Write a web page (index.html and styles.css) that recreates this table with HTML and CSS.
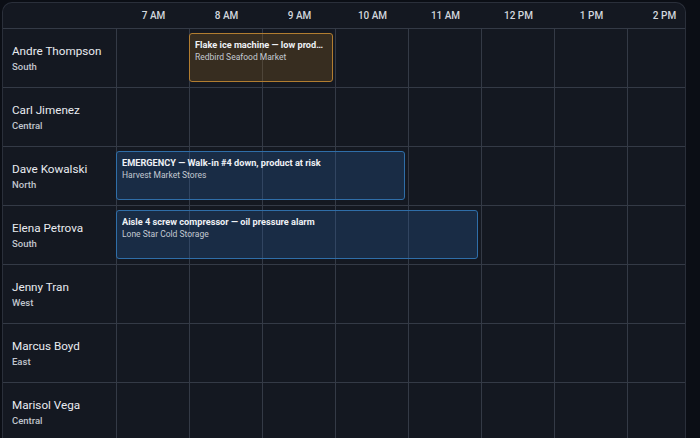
FILE: index.html
```html
<!DOCTYPE html>
<html lang="en">
<head>
<meta charset="utf-8">
<title>Dispatch Schedule</title>
<link rel="stylesheet" href="styles.css">
</head>
<body>
<div class="board">
  <div class="row head">
    <div class="name-cell"></div>
    <div class="hour">7 AM</div>
    <div class="hour">8 AM</div>
    <div class="hour">9 AM</div>
    <div class="hour">10 AM</div>
    <div class="hour">11 AM</div>
    <div class="hour">12 PM</div>
    <div class="hour">1 PM</div>
    <div class="hour">2 PM</div>
  </div>

  <div class="row">
    <div class="name-cell"><span class="tech">Andre Thompson</span><span class="region">South</span></div>
    <div class="slot"></div><div class="slot"></div><div class="slot"></div><div class="slot"></div><div class="slot"></div><div class="slot"></div><div class="slot"></div><div class="slot"></div>
    <div class="job job-warn" style="left:186px;width:144px">
      <div class="job-title">Flake ice machine — low production</div>
      <div class="job-site">Redbird Seafood Market</div>
    </div>
  </div>

  <div class="row">
    <div class="name-cell"><span class="tech">Carl Jimenez</span><span class="region">Central</span></div>
    <div class="slot"></div><div class="slot"></div><div class="slot"></div><div class="slot"></div><div class="slot"></div><div class="slot"></div><div class="slot"></div><div class="slot"></div>
  </div>

  <div class="row">
    <div class="name-cell"><span class="tech">Dave Kowalski</span><span class="region">North</span></div>
    <div class="slot"></div><div class="slot"></div><div class="slot"></div><div class="slot"></div><div class="slot"></div><div class="slot"></div><div class="slot"></div><div class="slot"></div>
    <div class="job job-info" style="left:113px;width:289px">
      <div class="job-title">EMERGENCY — Walk-in #4 down, product at risk</div>
      <div class="job-site">Harvest Market Stores</div>
    </div>
  </div>

  <div class="row">
    <div class="name-cell"><span class="tech">Elena Petrova</span><span class="region">South</span></div>
    <div class="slot"></div><div class="slot"></div><div class="slot"></div><div class="slot"></div><div class="slot"></div><div class="slot"></div><div class="slot"></div><div class="slot"></div>
    <div class="job job-info" style="left:113px;width:362px">
      <div class="job-title">Aisle 4 screw compressor — oil pressure alarm</div>
      <div class="job-site">Lone Star Cold Storage</div>
    </div>
  </div>

  <div class="row">
    <div class="name-cell"><span class="tech">Jenny Tran</span><span class="region">West</span></div>
    <div class="slot"></div><div class="slot"></div><div class="slot"></div><div class="slot"></div><div class="slot"></div><div class="slot"></div><div class="slot"></div><div class="slot"></div>
  </div>

  <div class="row">
    <div class="name-cell"><span class="tech">Marcus Boyd</span><span class="region">East</span></div>
    <div class="slot"></div><div class="slot"></div><div class="slot"></div><div class="slot"></div><div class="slot"></div><div class="slot"></div><div class="slot"></div><div class="slot"></div>
  </div>

  <div class="row">
    <div class="name-cell"><span class="tech">Marisol Vega</span><span class="region">Central</span></div>
    <div class="slot"></div><div class="slot"></div><div class="slot"></div><div class="slot"></div><div class="slot"></div><div class="slot"></div><div class="slot"></div><div class="slot"></div>
  </div>
</div>
</body>
</html>
```
FILE: styles.css
```css
* { box-sizing: border-box; }

html, body {
  margin: 0;
  background: #0b0e15;
  height: 438px;
  overflow: hidden;
}

body {
  padding: 2px 0 0 2px;
  font-family: Roboto, "Noto Sans", "Liberation Sans", sans-serif;
  color: #e4e7ec;
}

.board {
  width: 684px;
  height: 436px;
  border: 1px solid #2a2f3a;
  border-bottom-width: 0;
  border-radius: 10px 10px 0 0;
  background: #141821;
  overflow: hidden;
  display: flex;
  flex-direction: column;
}

.row {
  position: relative;
  display: grid;
  grid-template-columns: 114px repeat(8, 73px);
  height: 59px;
  flex: none;
  border-bottom: 1px solid #343a46;
}

.row.head {
  height: 26px;
}

.hour {
  display: flex;
  align-items: center;
  justify-content: center;
  font-size: 10px;
  font-weight: 500;
  color: #d2d6dd;
}

.name-cell {
  display: flex;
  flex-direction: column;
  justify-content: center;
  gap: 2px;
  padding-left: 9px;
  border-right: 1px solid #343a46;
}

.head .name-cell {
  border-right: none;
}

.tech {
  font-size: 11.7px;
  color: #e8ebf0;
  line-height: 14px;
}

.region {
  font-size: 9.5px;
  font-weight: 500;
  color: #c0c5cd;
  line-height: 13px;
}

.slot {
  border-right: 1px solid #343a46;
}

.job {
  position: absolute;
  top: 4px;
  height: 49px;
  border-radius: 3px;
  border: 1px solid;
  padding: 4px 5px 0 5px;
  overflow: hidden;
}

.job-warn {
  background: rgba(140, 95, 30, 0.3);
  border-color: #b27d30;
}

.job-info {
  background: rgba(40, 105, 180, 0.25);
  border-color: #2f6ea8;
}

.job-title {
  font-size: 9.2px;
  font-weight: 700;
  color: #eef1f5;
  line-height: 13px;
  white-space: nowrap;
  overflow: hidden;
  text-overflow: ellipsis;
}

.job-site {
  margin-top: 0;
  font-size: 8.5px;
  color: #c3c9d2;
  line-height: 12px;
  white-space: nowrap;
  overflow: hidden;
  text-overflow: ellipsis;
}
```
